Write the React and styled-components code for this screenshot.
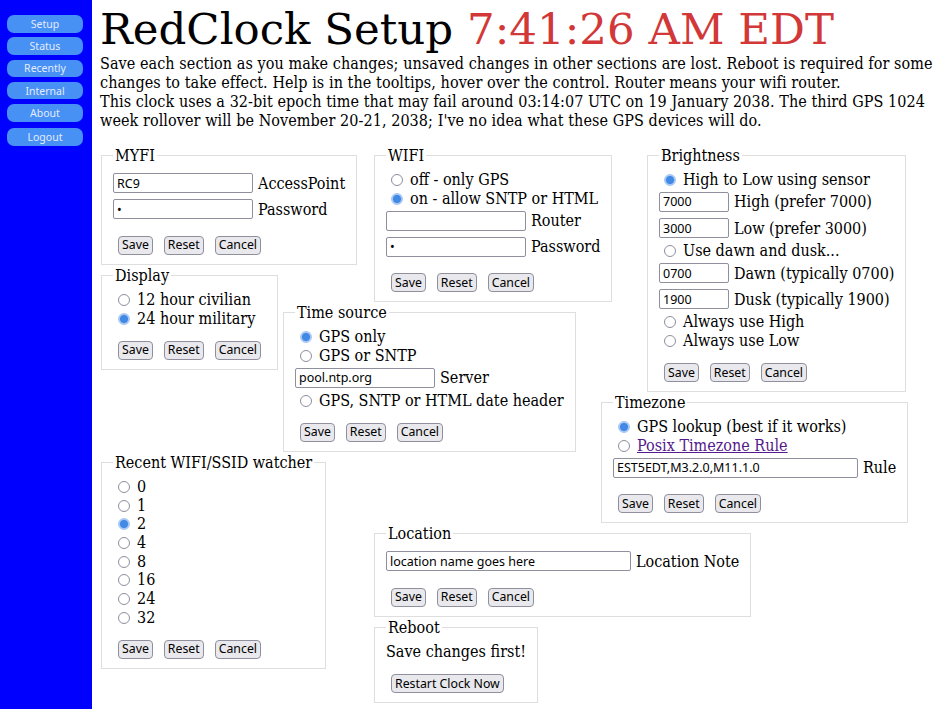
import React from "react";
import styled, { createGlobalStyle } from "styled-components";

const GlobalStyle = createGlobalStyle`
  html, body { margin: 0; padding: 0; background: #fff; }
  body {
    font-family: "DejaVu Serif Condensed", "DejaVu Serif", serif;
    font-stretch: semi-condensed;
    font-size: 16px;
    color: #000;
  }
`;

const Page = styled.div`
  display: flex;
  min-height: 709px;
`;

const Sidebar = styled.nav`
  width: 92px;
  flex-shrink: 0;
  background: #0000ff;
  display: flex;
  flex-direction: column;
  align-items: flex-start;
  gap: 4.8px;
  padding: 15px 0 0 7px;
  box-sizing: border-box;
`;

const NavButton = styled.button`
  width: 76px;
  height: 17.5px;
  margin-top: ${(p) => (p.$extra ? "2px" : "0")};
  border: none;
  border-radius: 7px;
  background: #4790f4;
  color: #e4ecff;
  font: 10.5px "Noto Sans", sans-serif;
  display: flex;
  align-items: center;
  justify-content: center;
  padding: 0;
`;

const Main = styled.main`
  flex: 1;
  padding: 4px 4px 0 8px;
  min-width: 0;
`;

const Title = styled.h1`
  margin: 0;
  font-family: "DejaVu Serif", serif;
  font-stretch: normal;
  font-size: 43.5px;
  font-weight: normal;
  line-height: normal;
  white-space: nowrap;
`;

const Clock = styled.span`
  color: #d23838;
`;

const Intro = styled.div`
  margin: 0 0 16px;
  line-height: normal;
  letter-spacing: 0.07px;
`;

const Line = styled.span`
  display: block;
  white-space: nowrap;
`;

const Board = styled.div`
  display: grid;
  grid-template-columns: 182px 91px 227px 46px 1fr;
  grid-template-rows: 120px 37px 90px 60px 71px 94px auto;
  margin-left: 1px;
`;

const Panel = styled.fieldset`
  grid-column: ${(p) => p.$col} / -1;
  grid-row: ${(p) => p.$row} / -1;
  justify-self: start;
  align-self: start;
  margin: 0;
  border: 1px solid #dedede;
  padding: 5px 11px 9px;
  min-width: 0;
`;

const Legend = styled.legend`
  padding: 0 2px;
  line-height: normal;
`;

const RadioRow = styled.label`
  display: flex;
  align-items: center;
  height: 18.7px;
  white-space: nowrap;
`;

const Radio = styled.input.attrs({ type: "radio" })`
  appearance: none;
  width: 12px;
  height: 12px;
  margin: 1px 7px 0 5px;
  border: 1px solid #8f8f9d;
  border-radius: 50%;
  background: #fff;
  box-sizing: border-box;
  flex-shrink: 0;
  &:checked {
    border-color: #a6c6f2;
    background: radial-gradient(circle, #4289e6 0 50%, #b0cdf4 66%);
  }
`;

const InputRow = styled.div`
  display: flex;
  align-items: center;
  gap: 5px;
  height: 26.3px;
  white-space: nowrap;
`;

const TextInput = styled.input`
  width: ${(p) => p.$w || 140}px;
  height: 20px;
  box-sizing: border-box;
  border: 1px solid #8f8f9d;
  border-radius: 2px;
  padding: 0 3px;
  font: 12.5px "Noto Sans", sans-serif;
  color: #000;
  background: #fff;
  flex-shrink: 0;
`;

const TextRow = styled.div`
  height: 18.7px;
  display: flex;
  align-items: center;
  white-space: nowrap;
`;

const ButtonRow = styled.div`
  display: flex;
  gap: 11px;
  margin-top: 13.5px;
  padding: 0 5px;
`;

const Button = styled.button`
  height: 19px;
  padding: 0 3px;
  border: 1px solid #8f8f9d;
  border-radius: 4px;
  background: #e9e9ed;
  color: #000;
  font: 12.3px "Noto Sans", sans-serif;
  line-height: 1;
  white-space: nowrap;
`;

const RuleLink = styled.a`
  color: #551a8b;
  text-decoration: underline;
`;

const Actions = () => (
  <ButtonRow>
    <Button>Save</Button>
    <Button>Reset</Button>
    <Button>Cancel</Button>
  </ButtonRow>
);

const Choice = ({ name, checked, children }) => (
  <RadioRow>
    <Radio name={name} defaultChecked={checked} />
    <span>{children}</span>
  </RadioRow>
);

const Field = ({ value = "", w, type = "text", children }) => (
  <InputRow>
    <TextInput type={type} defaultValue={value} $w={w} />
    <span>{children}</span>
  </InputRow>
);

const navItems = ["Setup", "Status", "Recently", "Internal", "About"];
const watcher = ["0", "1", "2", "4", "8", "16", "24", "32"];

export default function App() {
  return (
    <>
      <GlobalStyle />
      <Page>
        <Sidebar>
          {navItems.map((n) => (
            <NavButton key={n}>{n}</NavButton>
          ))}
          <NavButton $extra>Logout</NavButton>
        </Sidebar>
        <Main>
          <Title>
            RedClock Setup <Clock>7:41:26 AM EDT</Clock>
          </Title>
          <Intro>
            <Line>
              Save each section as you make changes; unsaved changes in other sections are lost. Reboot is required for some
            </Line>
            <Line>
              changes to take effect. Help is in the tooltips, hover over the control. Router means your wifi router.
            </Line>
            <Line>
              This clock uses a 32-bit epoch time that may fail around 03:14:07 UTC on 19 January 2038. The third GPS 1024
            </Line>
            <Line>week rollover will be November 20-21, 2038; I've no idea what these GPS devices will do.</Line>
          </Intro>
          <Board>
            <Panel $col={1} $row={1}>
              <Legend>MYFI</Legend>
              <Field value="RC9">AccessPoint</Field>
              <Field value="x" type="password">Password</Field>
              <Actions />
            </Panel>

            <Panel $col={3} $row={1}>
              <Legend>WIFI</Legend>
              <Choice name="wifi">off - only GPS</Choice>
              <Choice name="wifi" checked>on - allow SNTP or HTML</Choice>
              <Field value="">Router</Field>
              <Field value="x" type="password">Password</Field>
              <Actions />
            </Panel>

            <Panel $col={5} $row={1}>
              <Legend>Brightness</Legend>
              <Choice name="bright" checked>High to Low using sensor</Choice>
              <Field value="7000" w={70}>High (prefer 7000)</Field>
              <Field value="3000" w={70}>Low (prefer 3000)</Field>
              <Choice name="bright">Use dawn and dusk...</Choice>
              <Field value="0700" w={70}>Dawn (typically 0700)</Field>
              <Field value="1900" w={70}>Dusk (typically 1900)</Field>
              <Choice name="bright">Always use High</Choice>
              <Choice name="bright">Always use Low</Choice>
              <Actions />
            </Panel>

            <Panel $col={1} $row={2}>
              <Legend>Display</Legend>
              <Choice name="display">12 hour civilian</Choice>
              <Choice name="display" checked>24 hour military</Choice>
              <Actions />
            </Panel>

            <Panel $col={2} $row={3}>
              <Legend>Time source</Legend>
              <Choice name="source" checked>GPS only</Choice>
              <Choice name="source">GPS or SNTP</Choice>
              <Field value="pool.ntp.org">Server</Field>
              <Choice name="source">GPS, SNTP or HTML date header</Choice>
              <Actions />
            </Panel>

            <Panel $col={4} $row={4}>
              <Legend>Timezone</Legend>
              <Choice name="tz" checked>GPS lookup (best if it works)</Choice>
              <Choice name="tz">
                <RuleLink href="#">Posix Timezone Rule</RuleLink>
              </Choice>
              <Field value="EST5EDT,M3.2.0,M11.1.0" w={245}>Rule</Field>
              <Actions />
            </Panel>

            <Panel $col={1} $row={5}>
              <Legend>Recent WIFI/SSID watcher</Legend>
              {watcher.map((v) => (
                <Choice key={v} name="watch" checked={v === "2"}>
                  {v}
                </Choice>
              ))}
              <Actions />
            </Panel>

            <Panel $col={3} $row={6}>
              <Legend>Location</Legend>
              <Field value="location name goes here" w={245}>Location Note</Field>
              <Actions />
            </Panel>

            <Panel $col={3} $row={7}>
              <Legend>Reboot</Legend>
              <TextRow>Save changes first!</TextRow>
              <ButtonRow>
                <Button>Restart Clock Now</Button>
              </ButtonRow>
            </Panel>
          </Board>
        </Main>
      </Page>
    </>
  );
}
